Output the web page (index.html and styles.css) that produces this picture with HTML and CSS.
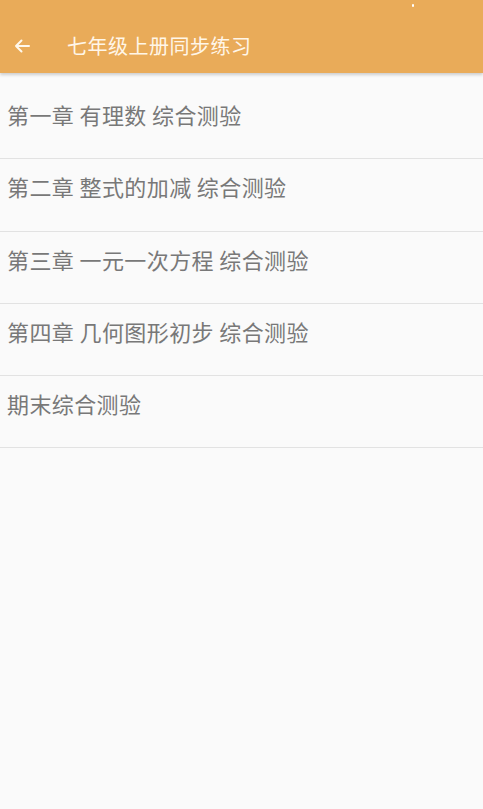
FILE: index.html
```html
<!DOCTYPE html>
<html lang="zh-CN">
<head>
    <meta charset="UTF-8">
    <meta name="viewport" content="width=device-width, initial-scale=1.0">
    <title>七年级上册同步练习</title>
    <link rel="stylesheet" href="styles.css">
</head>
<body>
    <header class="toolbar">
        <span class="status-dot"></span>
        <button class="back-btn" aria-label="返回">
            <svg width="16" height="14" viewBox="0 0 16 14">
                <path d="M15 7H2M7.5 1.5L2 7l5.5 5.5" fill="none" stroke="#fff8ec" stroke-width="2" stroke-linecap="round" stroke-linejoin="round"/>
            </svg>
        </button>
        <h1 class="toolbar-title">七年级上册同步练习</h1>
    </header>
    <ul class="chapter-list">
        <li class="chapter-item">第一章 有理数 综合测验</li>
        <li class="chapter-item">第二章 整式的加减 综合测验</li>
        <li class="chapter-item">第三章 一元一次方程 综合测验</li>
        <li class="chapter-item">第四章 几何图形初步 综合测验</li>
        <li class="chapter-item">期末综合测验</li>
    </ul>
</body>
</html>
```

FILE: styles.css
```css
:root {
    --primary-color: #e9ab59;
    --background: #fafafa;
    --text-color: #787878;
    --divider: #e2e2e2;
}
body {
    margin: 0;
    height: 100vh;
    background-color: var(--background);
    font-family: "Noto Sans CJK SC", "Noto Sans", sans-serif;
}
.toolbar {
    position: relative;
    display: flex;
    align-items: center;
    height: 73px;
    padding-top: 18px;
    box-sizing: border-box;
    background-color: var(--primary-color);
    box-shadow: 0 2px 3px rgba(0, 0, 0, 0.18);
}
.status-dot {
    position: absolute;
    top: 4px;
    left: 412px;
    width: 2px;
    height: 3px;
    background-color: #fff;
    border-radius: 1px;
}
.back-btn {
    display: flex;
    align-items: center;
    justify-content: center;
    width: 44px;
    height: 44px;
    padding: 0;
    border: none;
    background: none;
}
.toolbar-title {
    margin: 0 0 0 23px;
    font-size: 20px;
    font-weight: 400;
    color: #fff6e8;
    letter-spacing: 0.5px;
}
.chapter-list {
    list-style: none;
    margin: 0;
    padding: 14px 0 0;
}
.chapter-item {
    height: 72.25px;
    padding: 12px 0 0 7px;
    box-sizing: border-box;
    border-bottom: 1px solid var(--divider);
    font-size: 22px;
    line-height: 30px;
    letter-spacing: 0.4px;
    color: var(--text-color);
}
```
